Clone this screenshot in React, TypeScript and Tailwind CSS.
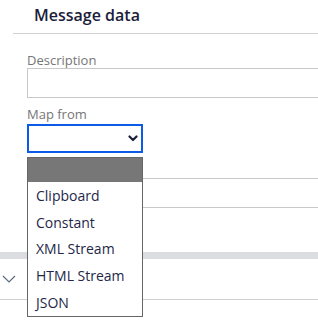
import React from 'react';

const options = ['Clipboard', 'Constant', 'XML Stream', 'HTML Stream', 'JSON'];

export default function App() {
  return (
    <div className="relative w-[318px] h-[325px] overflow-hidden bg-white font-['Open_Sans',sans-serif]">
      <div className="ml-[13px] border-b border-[#d2d2d2] pl-[21px] pt-[4px] pb-[7px]">
        <h2 className="text-[16px] leading-[22px] font-semibold text-[#1b1d3a]">Message data</h2>
      </div>

      <div className="pl-[27px]">
        <div className="mt-[18px] text-[13px] leading-[16px] text-[#767676]">Description</div>
        <div className="h-[30px] w-[300px] border border-[#c8c8c8]" />

        <div className="mt-[8px] text-[13px] leading-[16px] text-[#767676]">Map from</div>
        <div className="mt-[2px] flex h-[29px] w-[116px] items-center justify-end border-2 border-[#0b5be6] pr-[3px]">
          <svg width="10" height="7" viewBox="0 0 10 7" fill="none">
            <path d="M1.5 1.5 L5 5 L8.5 1.5" stroke="#1c1f3a" strokeWidth="2.2" strokeLinecap="round" strokeLinejoin="round" />
          </svg>
        </div>

        <div className="mt-[25px] h-[30px] w-[300px] border border-[#c8c8c8]" />
      </div>

      <div className="mt-[44px] h-[7px] bg-[#dcdde1]" />
      <div className="flex h-[41px] items-center border-b border-[#d2d2d2] pl-[2px]">
        <svg width="14" height="8" viewBox="0 0 14 8" fill="none">
          <path d="M1 1 L7 7 L13 1" stroke="#5b6b82" strokeWidth="1.2" />
        </svg>
      </div>

      <div className="absolute left-[27px] top-[157px] flex h-[160px] w-[116px] flex-col border border-[#666] bg-white">
        <div className="h-[24px] bg-[#777777]" />
        {options.map(opt => (
          <div key={opt} className="flex flex-1 items-center pl-[8px] text-[14px] text-[#1e2748]">
            {opt}
          </div>
        ))}
      </div>
    </div>
  );
}
